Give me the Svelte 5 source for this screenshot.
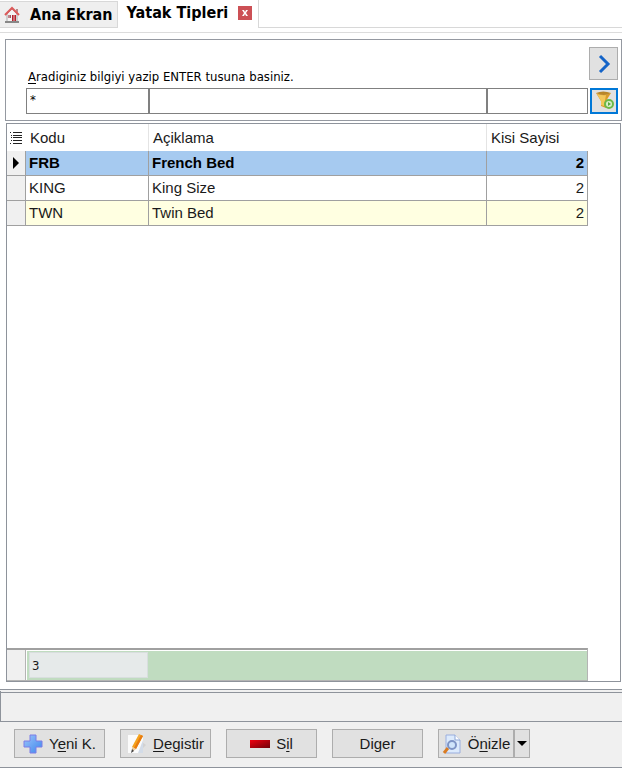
<script lang="ts">
  type BedType = { code: string; description: string; persons: number };

  let beds: BedType[] = $state([
    { code: 'FRB', description: 'French Bed', persons: 2 },
    { code: 'KING', description: 'King Size', persons: 2 },
    { code: 'TWN', description: 'Twin Bed', persons: 2 },
  ]);
  let selected = $state(0);
  let codeFilter = $state('*');
  let descriptionFilter = $state('');
  let personsFilter = $state('');
</script>

<div class="window">
  <nav class="tabs">
    <button class="tab">
      <svg width="16" height="18" viewBox="0 0 16 18">
        <path d="M3 8 8 3l5 5v8H3z" fill="#f4f4f4" stroke="#aaa" />
        <path d="M12 3h2v4l-2-2z" fill="#b98a8a" />
        <path d="M1 9 8 2l7 7" fill="none" stroke="#dc5a5a" stroke-width="2" />
        <path d="M8 9h4v6H8z" fill="#b5202c" />
        <path d="M4 9h3v3H4z" fill="#9b5560" />
        <path d="M5 9v3M10 9v6" stroke="#e8b8b8" />
        <path d="M1 16h14" stroke="#888" stroke-width="2" />
      </svg>
      Ana Ekran
    </button>
    <div class="tab active">
      <span>Yatak Tipleri</span>
      <button class="close" aria-label="Kapat">
        <svg width="14" height="14" viewBox="0 0 14 14">
          <path d="M4 4h2l1 2 1-2h2L8 7l2 3H8L7 8l-1 2H4l2-3z" fill="#fff" />
        </svg>
      </button>
    </div>
    <div class="tab-rest"></div>
  </nav>

  <main>
    <form class="search" onsubmit={(e) => e.preventDefault()}>
      <div class="search-top">
        <label for="code"><u>A</u>radiginiz bilgiyi yazip ENTER tusuna basiniz.</label>
        <button type="button" class="next" aria-label="Ileri">
          <svg width="27" height="31" viewBox="0 0 27 31">
            <path d="M10 8l8 8-8 8" fill="none" stroke="#1464c8" stroke-width="3" />
          </svg>
        </button>
      </div>
      <div class="search-fields">
        <input id="code" bind:value={codeFilter} />
        <input aria-label="Açiklama" bind:value={descriptionFilter} />
        <input aria-label="Kisi Sayisi" bind:value={personsFilter} />
        <button class="filter" aria-label="Filtrele">
          <svg width="24" height="22" viewBox="0 0 24 22">
            <path d="M4 3q8 3 15 0l-5 8v7l-5-2v-5z" fill="#dc9c28" />
            <path d="M5 4q7 2 9 1l-2 11-3-1v-4z" fill="#f3c75a" />
            <path d="M4 3q7-3 15 0-7 4-15 0z" fill="#b98628" />
            <circle cx="17" cy="14" r="4" fill="#d9efcc" stroke="#6cba48" stroke-width="2" />
            <path d="M16 12l3 2-3 2z" fill="#5aa83c" />
          </svg>
        </button>
      </div>
    </form>

    <section class="grid">
      <table>
        <thead>
          <tr>
            <th class="marker" aria-label="Kolonlar">
              <svg width="14" height="14" viewBox="0 0 14 14" fill="#222">
                <path d="M4 1h9v1H4zM4 4h9v1H4zM4 6h9v1H4zM4 9h9v1H4zM4 12h9v1H4z" />
                <path d="M1 1h1v1H1zM2 4h1v1H2zM2 6h1v1H2zM2 9h1v1H2zM1 12h1v1H1z" />
              </svg>
            </th>
            <th class="code">Kodu</th>
            <th>Açiklama</th>
            <th class="persons">Kisi Sayisi</th>
          </tr>
        </thead>
        <tbody>
          {#each beds as bed, i}
            <tr class:odd={i % 2 === 0} class:selected={i === selected} onclick={() => (selected = i)}>
              <td class="marker">
                {#if i === selected}
                  <svg width="6" height="12" viewBox="0 0 6 12"><path d="M0 0l6 6-6 6z" /></svg>
                {/if}
              </td>
              <td>{bed.code}</td>
              <td>{bed.description}</td>
              <td class="number">{bed.persons}</td>
            </tr>
          {/each}
        </tbody>
      </table>
      <footer class="summary">
        <div class="summary-marker"></div>
        <div class="summary-bar"><output>{beds.length}</output></div>
      </footer>
    </section>
  </main>

  <div class="status"></div>

  <div class="toolbar">
    <button class="action">
      <svg width="20" height="20" viewBox="0 0 20 20">
        <defs>
          <linearGradient id="plus" x2="1" y2="1">
            <stop stop-color="#9cc4fa" />
            <stop offset="1" stop-color="#3c86ec" />
          </linearGradient>
        </defs>
        <path d="M7 1h6v6h6v6h-6v6H7v-6H1V7h6z" fill="url(#plus)" stroke="#7c7ce6" />
      </svg>
      <span>Y<u>e</u>ni K.</span>
    </button>
    <button class="action">
      <svg width="20" height="20" viewBox="0 0 20 20">
        <path d="M15 8l4 3-3 3z" fill="#d2d2d2" />
        <path d="M1 1h12l3 3v15H1z" fill="#fbfbfb" />
        <path d="M11 19l5-13v13z" fill="#d3dce8" />
        <path d="M12 0l4 2-7 13-4-2z" fill="#f5a21c" />
        <path d="M14 1l2 1-7 13-2-1z" fill="#e87b10" />
        <path d="M5 13l4 2-4 3z" fill="#e8caa0" />
        <path d="M5 15l2 2-3 2z" fill="#444" />
      </svg>
      <span><u>D</u>egistir</span>
    </button>
    <button class="action">
      <svg width="20" height="20" viewBox="0 0 20 20">
        <defs>
          <linearGradient id="minus" x2="1" y2="1">
            <stop stop-color="#f00010" />
            <stop offset="1" stop-color="#700008" />
          </linearGradient>
        </defs>
        <path d="M0 6h20v8H0z" fill="url(#minus)" />
      </svg>
      <span>S<u>i</u>l</span>
    </button>
    <button class="action"><span>Di<u>g</u>er</span></button>
    <div class="split">
      <button class="action">
        <svg width="20" height="20" viewBox="0 0 20 20">
          <path d="M4 1h9l5 5v13H4z" fill="#dceafc" stroke="#9aaede" />
          <path d="M13 1v5h5" fill="#fff" stroke="#8da6d6" />
          <path d="M6 14l-4 5" stroke="#d97b22" stroke-width="3" />
          <circle cx="10" cy="11" r="4" fill="#cfe4fb" stroke="#7e94c6" stroke-width="2" />
        </svg>
        <span>Ö<u>n</u>izle</span>
      </button>
      <button class="arrow" aria-label="Diger islemler">
        <svg width="10" height="5" viewBox="0 0 10 5"><path d="M0 0h10L5 5z" /></svg>
      </button>
    </div>
  </div>
</div>

<style>
  :global(body) { margin: 0; background: #fff; }
  .window {
    display: flex; flex-direction: column; min-height: 100vh;
    font: 15px/18px "Liberation Sans", Arial, sans-serif; color: #1a1a1a;
  }
  * { box-sizing: border-box; }
  svg { display: block; flex: none; }
  button { font: inherit; color: inherit; padding: 0; margin: 0; }
  u { text-underline-offset: 2px; }

  .tabs { display: flex; height: 33px; border-bottom: 1px solid #dcdcdc; font: bold 16px/20px "DejaVu Sans Condensed", Tahoma, sans-serif; color: #000; }
  .tab {
    display: flex; align-items: center; gap: 10px; height: 27px; margin-top: 1px; padding: 0 4px;
    border: 1px solid #d8d8d8; border-left: 0; background: #efefef; white-space: nowrap;
  }
  .tab.active { height: 26px; margin: 0; padding: 0 6px 0 9px; border: 0; background: #fff; }
  .close { width: 14px; height: 14px; border: 0; background: #cc5055; }
  .tab-rest { flex: 1; height: 28px; border: 1px solid #d8d8d8; border-width: 0 0 1px 1px; }

  main { flex: 1; display: flex; flex-direction: column; gap: 2px; padding: 6px 0 7px 5px; }
  .search { padding: 7px 3px 6px 20px; border: 1px solid #9599a1; }
  .search-top { display: flex; justify-content: space-between; height: 38px; }
  .search label { align-self: flex-end; padding-left: 2px; font: 13px/16px "DejaVu Sans Condensed", Tahoma, sans-serif; color: #000; }
  .next { width: 29px; height: 33px; border: 1px solid #adadad; background: #e1e1e1; }
  .search-fields { display: grid; grid-template-columns: 123px 1fr 101px 30px; margin-top: 3px; }
  .search-fields input {
    width: 100%; height: 26px; padding: 0 3px 3px; border: 1px solid #808080; border-radius: 0;
    font: 13px "DejaVu Sans Condensed", Tahoma, sans-serif; background: #fff; outline: 0;
  }
  .filter { width: 28px; height: 26px; margin-left: 2px; border: 2px solid #0078d7; background: #e1e1e1; }

  .grid { flex: 1; display: flex; flex-direction: column; justify-content: space-between; margin: 0 1px; border: 1px solid #8e939b; }
  table { width: calc(100% - 32px); border-collapse: separate; border-spacing: 0; table-layout: fixed; }
  th, td { height: 25px; padding: 0 3px; border: 1px solid #a0a0a0; border-width: 0 1px 1px 0; text-align: left; }
  th { height: 27px; padding: 1px 4px 0; border-color: #e4e4e4; border-bottom: 0; font-weight: normal; }
  th:last-child { border-right: 0; }
  .marker { width: 19px; }
  th.marker { padding: 0 0 0 2px; border-right: 0; }
  td.marker { padding: 0 6px; background: #f0f0f0; }
  .code { width: 123px; }
  .persons { width: 101px; white-space: nowrap; }
  .number { text-align: right; }
  .odd td:not(.marker) { background: #ffffe1; }
  .selected td:not(.marker) { background: #a6caf0; font-weight: bold; color: #000; }

  .summary { display: flex; height: 33px; margin-right: 32px; border: 1px solid #b4b4b4; border-top: 2px solid #a0a0a0; border-left: 0; }
  .summary-marker { width: 19px; border-right: 1px solid #b4b4b4; background: #f0f0f0; }
  .summary-bar { flex: 1; margin: 1px 0 0 1px; padding: 1px 2px; background: #c0dcc0; }
  .summary output {
    display: block; width: 119px; height: 26px; padding-left: 2px; border: 1px solid #d8dede;
    background: #e6eaea; font: 13px/26px "DejaVu Sans Condensed", Tahoma, sans-serif;
  }

  .status { height: 33px; border: 1px solid #8e939b; border-right: 0; border-top: 4px double #8e939b; background: #f0f0f0; }
  .toolbar { display: flex; gap: 15px; height: 46px; padding: 7px 0 0 14px; border-bottom: 1px solid #8e939b; background: #f0f0f0; margin-bottom: 1px; }
  .action {
    display: flex; align-items: center; justify-content: center; gap: 6px; width: 91px; height: 29px;
    border: 1px solid #adadad; background: #e1e1e1; white-space: nowrap;
  }
  .split { display: flex; }
  .split .action { width: 76px; }
  .arrow { display: grid; place-items: center; width: 16px; height: 29px; border: 1px solid #adadad; background: #e1e1e1; }
</style>
